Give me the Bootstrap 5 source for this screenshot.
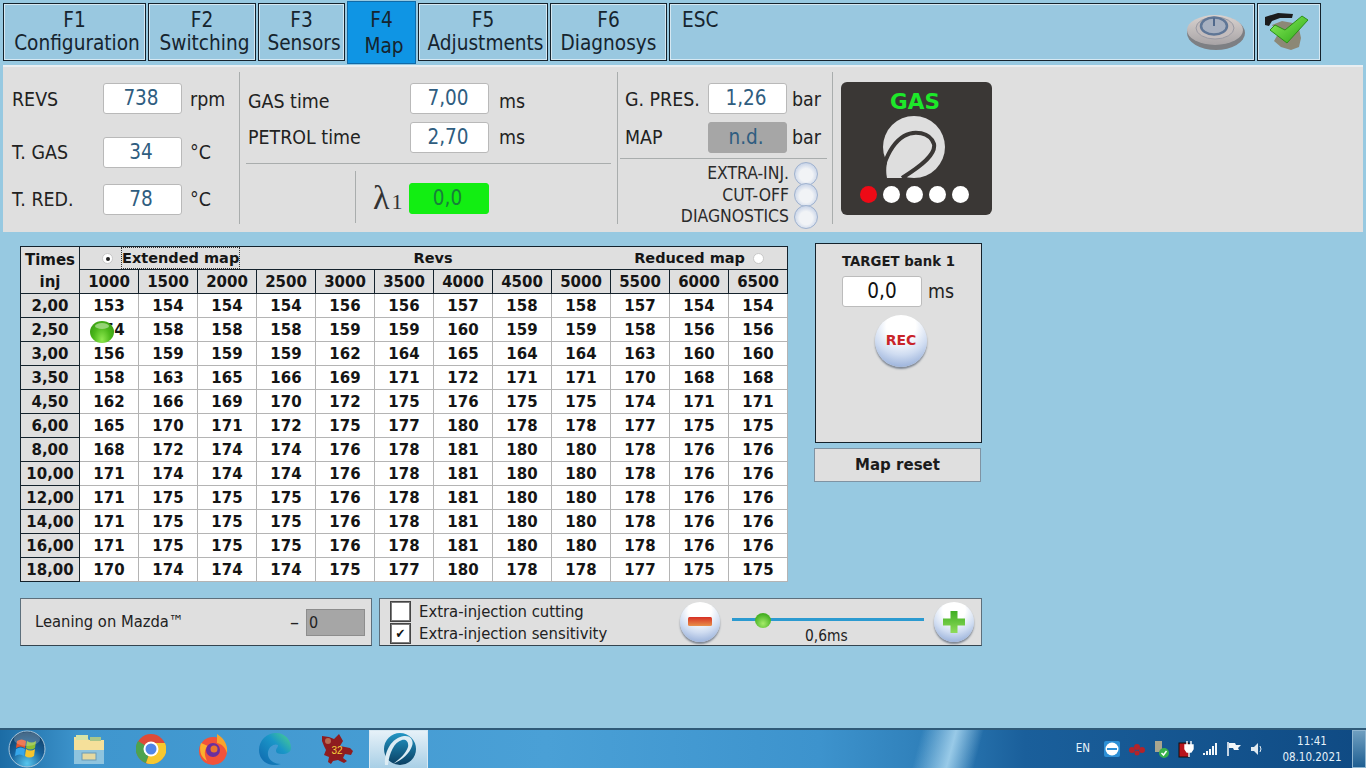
<!DOCTYPE html>
<html lang="en">
<head>
<meta charset="UTF-8" />
<title>Map</title>
<link href="https://cdn.jsdelivr.net/npm/bootstrap@5.3.3/dist/css/bootstrap.min.css" rel="stylesheet" />
<style>
  html, body { height: 768px; overflow: hidden; }
  body { background: #97c9e1; font-family: "DejaVu Sans Condensed", "Liberation Sans", sans-serif; color: #222; width: 1366px; }
  .app-shell { height: 768px; }

  /* function key tabs */
  .fkey-bar { height: 65px; padding: 3px 0 0 3px; gap: 2px; }
  .fkey { height: 58px; background: #99c8e0; border: 1px solid #14222c; box-shadow: 0 0 0 1px #d5e8f2 inset; color: #16242e; font-size: 20.6px; line-height: 22.5px; text-align: center; padding-top: 5px; }
  .fkey-sub { display: inline-block; margin-left: 5px; }
  .fkey-active { height: 63px; margin-top: -2px; background: #0f95e4; border-color: #0f6aa8; padding-top: 5px; line-height: 26px; box-shadow: none; }
  .fkey-esc { text-align: left; padding-left: 12px; }
  .w-f1 { width: 143px; } .w-f2 { width: 108px; } .w-f3 { width: 87px; } .w-f4 { width: 69px; }
  .w-f5 { width: 130px; } .w-f6 { width: 117px; } .w-esc { width: 586px; } .w-ok { width: 64px; padding: 0; }

  /* gauges */
  .gauge-panel { height: 167px; margin: 0 3px 0 3px; background: #dfdfdf; border-top: 2px solid #e9eef1; padding-top: 5px; font-size: 19.4px; color: #222; }
  .gauge-col { height: 152px; border-right: 1px solid #a9adad; }
  .col-a { width: 237px; padding: 11px 0 0 9px; }
  .col-b { width: 378px; padding-top: 11px; }
  .col-c { width: 215px; padding-top: 11px; }
  .read-row { height: 30px; }
  .read-label { line-height: 30px; }
  .drop-1 { padding-top: 1px; } .drop-2 { padding-top: 2px; } .drop-4 { padding-top: 4px; }
  .readout { width: 79px; height: 31px; background: #fff; border: 1px solid #b9b9b9; border-radius: 3px; color: #2f5d80; text-align: center; font-size: 20.5px; line-height: 29px; padding-right: 3px; }
  .readout-off { background: #a6a6a6; border-color: #a6a6a6; }
  .readout-on { background: #12ee12; border-color: #12ee12; color: #17803a; }
  .gap-a1 { margin-top: 24px; } .gap-a2 { margin-top: 17px; }
  .gap-b { margin-top: 9px; }
  .thin-rule { height: 1px; background: #a9adad; }
  .lambda-mark { font-family: "Liberation Serif", serif; font-size: 34px; line-height: 30px; color: #333; }
  .lambda-sub { font-family: "Liberation Serif", serif; font-size: 22px; margin-left: 2px; }
  .lamp-row { height: 21.5px; font-size: 17.4px; line-height: 21px; color: #2b2b2b; }
  .lamp { width: 24px; height: 24px; border-radius: 50%; background: radial-gradient(circle at 50% 55%, #f1f3f6 40%, #a8bbdc 100%); border: 1px solid #9fb2cf; margin-left: 5px; }
  .gas-box { width: 151px; height: 133px; margin: 10px 0 0 8px; background: #3a3735; border-radius: 6px; }
  .gas-word { color: #1de82a; font-weight: 700; font-size: 21.5px; line-height: 24px; padding: 8px 3px 0 0; font-family: "DejaVu Sans", sans-serif; }
  .led { width: 17px; height: 17px; border-radius: 50%; background: #fff; }
  .led-red { background: #ee0a16; }

  /* map table */
  .work-area { padding: 14px 0 0 20px; }
  .map-wrap { position: relative; width: 768px; }
  .inj-map { border-collapse: collapse; width: 768px; table-layout: fixed; font-family: "DejaVu Sans", sans-serif; font-weight: 700; background: #fff; color: #151515; font-size: 15px; border: 1px solid #14222c; }
  .inj-map td, .inj-map th { border: 1px solid #b4b4b4; height: 24px; padding: 0; text-align: center; line-height: 22px; }
  .inj-map thead th { background: #dfdfdf; border: 1px solid #14222c; }
  .inj-map th.row-head { background: #dfdfdf; border-right: 1px solid #14222c; border-left: 1px solid #14222c; border-bottom-color: #14222c; }
  .inj-map .top-head { height: 23px; }
  .inj-map .times-head { line-height: 22px; padding-top: 2px; }
  .head-inner { padding: 0 23px 0 22px; height: 22px; font-size: 14.5px; }
  .dotted-focus { border: 1px dotted #333; padding: 0; line-height: 20px; }
  .mini-radio { width: 11px; height: 11px; border-radius: 50%; background: #fff; border: 1px solid #c8c8c8; position: relative; }
  .mini-radio-on::after { content: ""; position: absolute; left: 3px; top: 3px; width: 4px; height: 4px; border-radius: 50%; background: #222; }
  .live-ball { position: absolute; left: 70px; top: 75px; width: 24px; height: 22px; border-radius: 50%; background: radial-gradient(ellipse at 50% 85%, #8fe84f 0%, #4bb81a 50%, #2f8f10 100%); }
  .live-ball::after { content: ""; position: absolute; left: 5px; top: 2px; width: 14px; height: 6px; border-radius: 50%; background: #a9dc8c; opacity: .8; }

  .target-side { width: 168px; margin-left: 27px; margin-top: -3px; }
  .target-card { width: 167px; height: 200px; background: #dfdfdf; border: 1px solid #14222c; text-align: center; padding-top: 8px; }
  .target-title { font-family: "DejaVu Sans", sans-serif; font-weight: 700; font-size: 13.3px; line-height: 20px; color: #1b1b1b; }
  .target-val { width: 80px; height: 31px; background: #fff; border: 1px solid #bcbcbc; border-radius: 3px; color: #111; font-size: 20.5px; line-height: 29px; }
  .target-unit { font-size: 19.4px; color: #222; margin-left: 6px; }
  .orb { border-radius: 50%; background: radial-gradient(circle at 50% 20%, #fff 30%, #cfdcf1 60%, #7f9ccf 100%); box-shadow: 0 2px 2px #7e8794; }
  .orb-rec { width: 52px; height: 52px; margin: 8px 0 0 59px; color: #c9242a; font-family: "DejaVu Sans", sans-serif; font-weight: 700; font-size: 14px; line-height: 50px; }
  .reset-bar { width: 167px; height: 34px; margin: 5px 0 0 -1px; background: #dfdfdf; border: 1px solid #7f93a3; font-family: "DejaVu Sans", sans-serif; font-weight: 700; font-size: 15px; line-height: 33px; text-align: center; color: #1b1b1b; }

  /* bottom strip */
  .strip { padding: 16px 0 0 20px; gap: 7px; }
  .strip-box { height: 48px; background: #dfdfdf; border: 1px solid #5d6f7c; border-bottom-color: #34444f; }
  .lean-box { width: 352px; padding: 0 6px 0 14px; font-size: 16.4px; }
  .lean-dash { font-size: 20px; margin-right: 1px; }
  .lean-val { width: 59px; height: 27px; background: #a6a6a6; border: 1px solid #8d8d8d; font-size: 16px; line-height: 25px; padding-left: 2px; margin-left: 6px; }
  .extra-box { width: 603px; font-size: 16.5px; padding-left: 10px; }
  .tick { width: 21px; height: 21px; background: #fff; border: 2px solid #7d7d7d; outline: 1px solid #444; outline-offset: -1px; font-size: 13px; line-height: 17px; text-align: center; color: #111; }
  .tick-gap { margin-top: 1px; }
  .tick-text { margin-left: 8px; line-height: 21px; }
  .orb-small { width: 40px; height: 40px; }
  .slide-area { width: 192px; margin: 0 10px 0 12px; position: relative; height: 46px; }
  .slide-track { position: absolute; left: 0; right: 0; top: 19px; height: 3px; background: #2b9ad0; }
  .slide-thumb { position: absolute; left: 23px; top: 14px; width: 16px; height: 15px; border-radius: 50%; background: radial-gradient(circle at 50% 70%, #a5ec6a, #46b023 70%); }
  .slide-label { position: absolute; left: 73px; top: 27px; font-size: 15.4px; line-height: 20px; }

  /* taskbar */
  .task-strip { height: 40px; margin-top: auto; background:
      linear-gradient(105deg, transparent 0 67%, rgba(190,230,250,.75) 69.500%, transparent 71.500%),
      linear-gradient(90deg, #1c6ca5 0%, #3f96ce 6%, #4aa0d6 40%, #3d93cd 60%, #2f7fb9 68%, #1a5f9b 75%, #0f4a83 100%);
      border-top: 2px solid #2f5a78; }
  .task-slot { width: 62px; height: 38px; }
  .task-slot-active { width: 59px; height: 39px; margin-left: 1px; background: linear-gradient(180deg, #e6f1f8, #a8cfe6); border: 1px solid #d7e8f2; }
  .start-slot { width: 58px; padding-right: 4px; }
  .tray { color: #e6f2fa; font-size: 11.5px; }
  .tray-lang { margin-right: 14px; }
  .tray-clock { width: 72px; text-align: center; line-height: 16px; font-size: 11.5px; margin-left: 12px; }
  .show-desk { width: 14px; height: 38px; margin-left: 4px; background: linear-gradient(180deg, #6f9fc0, #1f5f92); border: 1px solid #8fb6d1; }
</style>
</head>
<body>
<div class="app-shell d-flex flex-column">

  <div class="fkey-bar d-flex align-items-start">
    <div class="fkey w-f1">F1<br /><span class="fkey-sub">Configuration</span></div>
    <div class="fkey w-f2">F2<br /><span class="fkey-sub">Switching</span></div>
    <div class="fkey w-f3">F3<br /><span class="fkey-sub">Sensors</span></div>
    <div class="fkey w-f4 fkey-active">F4<br /><span class="fkey-sub">Map</span></div>
    <div class="fkey w-f5">F5<br /><span class="fkey-sub">Adjustments</span></div>
    <div class="fkey w-f6">F6<br />Diagnosys</div>
    <div class="fkey w-esc fkey-esc d-flex justify-content-between">
      <span>ESC</span>
      <svg class="me-2" style="margin-top:3px" width="60" height="40" viewBox="0 0 60 40">
        <defs><linearGradient id="capG" x1="0" y1="0" x2="0" y2="1"><stop offset="0" stop-color="#d9d2cf"/><stop offset="1" stop-color="#a8a4a6"/></linearGradient></defs>
        <ellipse cx="30" cy="21" rx="29" ry="17" fill="#7d7f83"/>
        <ellipse cx="29" cy="18" rx="28" ry="15" fill="url(#capG)"/>
        <ellipse cx="29" cy="16" rx="19" ry="11" fill="#c4bdbd" stroke="#9a9aa3"/>
        <ellipse cx="28" cy="14" rx="13" ry="8.500" fill="#a7b0c0" stroke="#5f7696" stroke-width="2.500"/>
        <path d="M28 6v8" stroke="#51698c" stroke-width="2"/>
      </svg>
    </div>
    <div class="fkey w-ok d-flex justify-content-center align-items-center">
      <svg width="50" height="46" viewBox="0 0 50 46">
        <defs><linearGradient id="tickG" x1="0" y1="0" x2="1" y2="1"><stop offset="0" stop-color="#8df05f"/><stop offset="1" stop-color="#2aa514"/></linearGradient></defs>
        <path d="M1 16V8L14 4l15 1-1 4-12 0-8 3-3 5z" fill="#1c1c1c"/>
        <path d="M8 16 18 12l16 3 3 14-2 9-8 3-10-3-7-6 4-7z" fill="#8c8876"/>
        <path d="M6 21l5-5 10 5L38 7l6 4-21 23z" fill="url(#tickG)" stroke="#2c8f18"/>
      </svg>
    </div>
  </div>

  <div class="gauge-panel d-flex">
    <div class="gauge-col col-a">
      <div class="read-row d-flex">
        <span class="read-label drop-2" style="width:91px">REVS</span><div class="readout">738</div><span class="read-label ms-2 drop-2">rpm</span>
      </div>
      <div class="read-row d-flex gap-a1">
        <span class="read-label drop-1" style="width:91px">T. GAS</span><div class="readout">34</div><span class="read-label ms-2 drop-1">°C</span>
      </div>
      <div class="read-row d-flex gap-a2">
        <span class="read-label drop-1" style="width:91px">T. RED.</span><div class="readout">78</div><span class="read-label ms-2 drop-1">°C</span>
      </div>
    </div>
    <div class="gauge-col col-b">
      <div class="read-row d-flex">
        <span class="read-label drop-4" style="width:162px;padding-left:8px;box-sizing:content-box">GAS time</span><div class="readout">7,00</div><span class="read-label drop-4" style="margin-left:10px">ms</span>
      </div>
      <div class="read-row d-flex gap-b">
        <span class="read-label drop-1" style="width:162px;padding-left:8px;box-sizing:content-box">PETROL time</span><div class="readout">2,70</div><span class="read-label drop-1" style="margin-left:10px">ms</span>
      </div>
      <div class="thin-rule" style="margin:11px 6px 0 6px"></div>
      <div class="d-flex" style="height:52px;margin-top:7px">
        <div style="width:116px;border-right:1px solid #a9adad"></div>
        <div class="d-flex" style="padding:12px 0 0 17px">
          <span class="lambda-mark" style="width:36px">λ<span class="lambda-sub">1</span></span>
          <div class="readout readout-on" style="margin-left:0;width:80px">0,0</div>
        </div>
      </div>
    </div>
    <div class="gauge-col col-c">
      <div class="read-row d-flex">
        <span class="read-label drop-2" style="width:83px;padding-left:7px;box-sizing:content-box">G. PRES.</span><div class="readout">1,26</div><span class="read-label drop-2" style="margin-left:5px">bar</span>
      </div>
      <div class="read-row d-flex gap-b">
        <span class="read-label drop-1" style="width:83px;padding-left:7px;box-sizing:content-box">MAP</span><div class="readout readout-off">n.d.</div><span class="read-label drop-1" style="margin-left:5px">bar</span>
      </div>
      <div class="thin-rule" style="margin:6px 5px 3px 2px"></div>
      <div class="lamp-row d-flex justify-content-end align-items-center" style="padding-right:14px;margin-top:4px"><span>EXTRA-INJ.</span><span class="lamp"></span></div>
      <div class="lamp-row d-flex justify-content-end align-items-center" style="padding-right:14px"><span>CUT-OFF</span><span class="lamp"></span></div>
      <div class="lamp-row d-flex justify-content-end align-items-center" style="padding-right:14px"><span>DIAGNOSTICS</span><span class="lamp"></span></div>
    </div>
    <div class="gas-box text-center">
      <div class="gas-word">GAS</div>
      <svg class="d-block" style="margin:1px 0 0 41px" width="66" height="64" viewBox="0 0 66 64">
        <circle cx="32" cy="32" r="31" fill="#dedede"/>
        <path d="M5 63C3 54 5 44 9 36l28 8-14 19z" fill="#dedede"/>
        <path d="M2 50C6 38 12 27 22 21 32 15 48 17 52 29 54 39 41 50 20 63" fill="none" stroke="#3a3735" stroke-width="4"/>
      </svg>
      <div class="d-flex" style="gap:6px;margin:7px 0 0 19px">
        <span class="led led-red"></span><span class="led"></span><span class="led"></span><span class="led"></span><span class="led"></span>
      </div>
    </div>
  </div>

  <div class="work-area d-flex">
    <div class="map-wrap">
      <table class="inj-map">
        <colgroup><col style="width:59px" /></colgroup>
        <thead>
          <tr class="top-head">
            <th rowspan="2" class="times-head">Times<br />inj</th>
            <th colspan="12" class="top-head">
              <div class="head-inner d-flex justify-content-between align-items-center">
                <span class="d-flex align-items-center" style="width:160px"><span class="mini-radio mini-radio-on me-2"></span><span class="dotted-focus">Extended map</span></span>
                <span style="margin-left:-30px">Revs</span>
                <span class="d-flex align-items-center">Reduced map<span class="mini-radio ms-2"></span></span>
              </div>
            </th>
          </tr>
          <tr>
            <th>1000</th><th>1500</th><th>2000</th><th>2500</th><th>3000</th><th>3500</th><th>4000</th><th>4500</th><th>5000</th><th>5500</th><th>6000</th><th>6500</th>
          </tr>
        </thead>
        <tbody>
          <tr><th class="row-head">2,00</th><td>153</td><td>154</td><td>154</td><td>154</td><td>156</td><td>156</td><td>157</td><td>158</td><td>158</td><td>157</td><td>154</td><td>154</td></tr>
          <tr><th class="row-head">2,50</th><td>154</td><td>158</td><td>158</td><td>158</td><td>159</td><td>159</td><td>160</td><td>159</td><td>159</td><td>158</td><td>156</td><td>156</td></tr>
          <tr><th class="row-head">3,00</th><td>156</td><td>159</td><td>159</td><td>159</td><td>162</td><td>164</td><td>165</td><td>164</td><td>164</td><td>163</td><td>160</td><td>160</td></tr>
          <tr><th class="row-head">3,50</th><td>158</td><td>163</td><td>165</td><td>166</td><td>169</td><td>171</td><td>172</td><td>171</td><td>171</td><td>170</td><td>168</td><td>168</td></tr>
          <tr><th class="row-head">4,50</th><td>162</td><td>166</td><td>169</td><td>170</td><td>172</td><td>175</td><td>176</td><td>175</td><td>175</td><td>174</td><td>171</td><td>171</td></tr>
          <tr><th class="row-head">6,00</th><td>165</td><td>170</td><td>171</td><td>172</td><td>175</td><td>177</td><td>180</td><td>178</td><td>178</td><td>177</td><td>175</td><td>175</td></tr>
          <tr><th class="row-head">8,00</th><td>168</td><td>172</td><td>174</td><td>174</td><td>176</td><td>178</td><td>181</td><td>180</td><td>180</td><td>178</td><td>176</td><td>176</td></tr>
          <tr><th class="row-head">10,00</th><td>171</td><td>174</td><td>174</td><td>174</td><td>176</td><td>178</td><td>181</td><td>180</td><td>180</td><td>178</td><td>176</td><td>176</td></tr>
          <tr><th class="row-head">12,00</th><td>171</td><td>175</td><td>175</td><td>175</td><td>176</td><td>178</td><td>181</td><td>180</td><td>180</td><td>178</td><td>176</td><td>176</td></tr>
          <tr><th class="row-head">14,00</th><td>171</td><td>175</td><td>175</td><td>175</td><td>176</td><td>178</td><td>181</td><td>180</td><td>180</td><td>178</td><td>176</td><td>176</td></tr>
          <tr><th class="row-head">16,00</th><td>171</td><td>175</td><td>175</td><td>175</td><td>176</td><td>178</td><td>181</td><td>180</td><td>180</td><td>178</td><td>176</td><td>176</td></tr>
          <tr><th class="row-head">18,00</th><td>170</td><td>174</td><td>174</td><td>174</td><td>175</td><td>177</td><td>180</td><td>178</td><td>178</td><td>177</td><td>175</td><td>175</td></tr>
        </tbody>
      </table>
      <div class="live-ball"></div>
    </div>

    <div class="target-side">
      <div class="target-card">
        <div class="target-title">TARGET bank 1</div>
        <div class="d-flex align-items-center" style="margin-top:4px;padding-left:26px">
          <div class="target-val">0,0</div><span class="target-unit">ms</span>
        </div>
        <div class="orb orb-rec">REC</div>
      </div>
      <div class="reset-bar">Map reset</div>
    </div>
  </div>

  <div class="strip d-flex">
    <div class="strip-box lean-box d-flex align-items-center">
      <span>Leaning on Mazda™</span>
      <span class="ms-auto lean-dash">–</span>
      <div class="lean-val">0</div>
    </div>
    <div class="strip-box extra-box d-flex align-items-center">
      <div>
        <div class="d-flex"><div class="tick"></div><span class="tick-text">Extra-injection cutting</span></div>
        <div class="d-flex tick-gap"><div class="tick">✔</div><span class="tick-text">Extra-injection sensitivity</span></div>
      </div>
      <div class="orb orb-small d-flex align-items-center justify-content-center ms-auto">
        <svg width="24" height="10" viewBox="0 0 24 10">
          <defs><linearGradient id="minusG" x1="0" y1="0" x2="0" y2="1"><stop offset="0" stop-color="#d62f24"/><stop offset="1" stop-color="#e8904a"/></linearGradient></defs>
          <rect width="24" height="9" rx="1.500" fill="url(#minusG)"/>
        </svg>
      </div>
      <div class="slide-area">
        <div class="slide-track"></div><div class="slide-thumb"></div><div class="slide-label">0,6ms</div>
      </div>
      <div class="orb orb-small d-flex align-items-center justify-content-center" style="margin-right:7px">
        <svg width="24" height="24" viewBox="0 0 24 24">
          <defs><linearGradient id="plusG" x1="0" y1="0" x2="0" y2="1"><stop offset="0" stop-color="#3fae22"/><stop offset="1" stop-color="#8fdc5a"/></linearGradient></defs>
          <path d="M8.500 1h7v7.500H23v7h-7.500V23h-7v-7.500H1v-7h7.500z" fill="url(#plusG)"/>
        </svg>
      </div>
    </div>
  </div>

  <div class="task-strip d-flex align-items-center">
    <div class="start-slot d-flex justify-content-center">
      <svg width="38" height="38" viewBox="0 0 38 38">
        <defs>
          <radialGradient id="orbG" cx=".5" cy=".9" r=".85"><stop offset="0" stop-color="#58c6ee"/><stop offset=".55" stop-color="#16609a"/><stop offset="1" stop-color="#123f66"/></radialGradient>
        </defs>
        <circle cx="19" cy="19" r="18" fill="url(#orbG)" stroke="#a9c6da"/>
        <path d="M9 11c3-2 6-2 9 0l-1 7c-3-2-6-2-9 0z" fill="#e8552a"/>
        <path d="M19 11c3 2 6 2 9 0l-1 7c-3 2-6 2-9 0z" fill="#8dbe33"/>
        <path d="M8 19c3-2 6-2 9 0l-1 7c-3-2-6-2-9 0z" fill="#37a6ea"/>
        <path d="M18 19c3 2 6 2 9 0l-1 7c-3 2-6 2-9 0z" fill="#f7c52d"/>
        <ellipse cx="19" cy="9" rx="13" ry="7" fill="#fff" opacity=".22"/>
      </svg>
    </div>
    <div class="task-slot d-flex justify-content-center align-items-center">
      <svg width="32" height="32" viewBox="0 0 32 32">
        <path d="M1 4h12l3 3h15v24H1z" fill="#f5e09a"/><rect x="3" y="2" width="12" height="5" fill="#d6e3a8"/><rect x="17" y="4" width="11" height="4" fill="#a9c68a"/>
        <rect x="1" y="17" width="30" height="14" fill="#8fc4de"/><rect x="9" y="20" width="14" height="7" fill="#e6d9a0" stroke="#6b9ab4"/>
      </svg>
    </div>
    <div class="task-slot d-flex justify-content-center align-items-center">
      <svg width="30" height="30" viewBox="0 0 30 30">
        <circle cx="15" cy="15" r="15" fill="#dd4b39"/>
        <path d="M15 15 2 7A15 15 0 0 0 10 29z" fill="#4ca34f"/>
        <path d="M15 15 10 29A15 15 0 0 0 29 9H15z" fill="#f6c830"/>
        <circle cx="15" cy="15" r="7.500" fill="#fff"/><circle cx="15" cy="15" r="5.500" fill="#4f86e8"/>
      </svg>
    </div>
    <div class="task-slot d-flex justify-content-center align-items-center">
      <svg width="32" height="32" viewBox="0 0 32 32">
        <circle cx="16" cy="18" r="14" fill="#f1533a"/>
        <path d="M20 1c8 5 11 12 10 19-2-6-5-9-10-10z" fill="#f9a32b"/>
        <path d="M4 10c-2 6-1 14 6 18-3-6-3-12 1-15z" fill="#fbb02d"/>
        <circle cx="16" cy="17" r="7" fill="#6a2f9e"/><circle cx="17" cy="16" r="3.500" fill="#e8762f"/>
      </svg>
    </div>
    <div class="task-slot d-flex justify-content-center align-items-center">
      <svg width="34" height="32" viewBox="0 0 34 32">
        <defs><linearGradient id="edgeG" x1="0" y1="1" x2="1" y2="0"><stop offset="0" stop-color="#0f66ad"/><stop offset=".6" stop-color="#1a96c8"/><stop offset="1" stop-color="#4fd38a"/></linearGradient></defs>
        <path d="M1 17C1 7 9 0 18 0c9 0 15 7 15 15 0 4-4 6-9 6-4 0-6-1-6-3 0-3 2-3 2-6-3-2-9 1-10 7-1 7 5 12 13 12-3 1-5 1-7 1C8 32 1 26 1 17z" fill="url(#edgeG)"/>
      </svg>
    </div>
    <div class="task-slot d-flex justify-content-center align-items-center">
      <svg width="36" height="32" viewBox="0 0 36 32">
        <path d="M3 3l7 1 5 2 5-5 4 7-3 5 10 2 3 3-2 4-6-1-2 4 4 3-3 2-6-3-5 1-2 3-3-2 1-5-5-2 2-5-2-4-2-5z" fill="#8f1c1f"/>
        <circle cx="9" cy="8" r="3" fill="#b86b52"/>
        <text x="18" y="21" text-anchor="middle" font-family="Liberation Sans, sans-serif" font-size="10" fill="#f5d33a">32</text>
      </svg>
    </div>
    <div class="task-slot task-slot-active d-flex justify-content-center align-items-center">
      <svg width="34" height="34" viewBox="0 0 34 34">
        <defs><linearGradient id="appG" x1="0" y1="0" x2="0" y2="1"><stop offset="0" stop-color="#2396c4"/><stop offset="1" stop-color="#0a3f62"/></linearGradient></defs>
        <circle cx="18" cy="17" r="16" fill="url(#appG)"/>
        <path d="M3 33C2 22 8 6 22 4c7-1 10 5 8 10-2 7-10 14-19 18 7-5 13-11 15-17 1-5-2-8-6-7C12 10 7 22 6 33z" fill="#dcecf4"/>
      </svg>
    </div>
    <div class="tray d-flex align-items-center ms-auto">
      <span class="tray-lang">EN</span>
      <svg class="me-2" width="16" height="16" viewBox="0 0 16 16"><rect width="16" height="16" rx="2" fill="#2d8fd5"/><circle cx="8" cy="8" r="6.500" fill="#fff"/><rect x="3" y="7" width="10" height="2" fill="#2d8fd5"/></svg>
      <svg class="me-2" width="18" height="14" viewBox="0 0 18 14"><g fill="#b3232a"><circle cx="4" cy="8" r="3"/><circle cx="9" cy="5" r="3"/><circle cx="14" cy="8" r="3"/><circle cx="9" cy="11" r="2.500"/></g></svg>
      <svg class="me-2" width="16" height="18" viewBox="0 0 16 18"><rect x="1" y="1" width="7" height="11" fill="#a9a68f"/><circle cx="10" cy="13" r="5" fill="#38b24a"/><path d="M7.500 13l2 2 3-4" stroke="#fff" fill="none" stroke-width="1.500"/></svg>
      <svg class="me-2" width="16" height="18" viewBox="0 0 16 18"><rect x="1" y="3" width="10" height="14" fill="#b8141c" stroke="#111"/><path d="M9 1v4M13 1v4M7 5h8v4l-2 3H9L7 9zM11 12v5" stroke="#fff" stroke-width="1.400" fill="#fff"/></svg>
      <svg class="me-2" width="16" height="14" viewBox="0 0 16 14"><g fill="#f2f6f9"><rect x="1" y="11" width="2" height="2"/><rect x="4" y="9" width="2" height="4"/><rect x="7" y="7" width="2" height="6"/><rect x="10" y="4" width="2" height="9"/><rect x="13" y="1" width="2" height="12"/></g></svg>
      <svg class="me-2" width="16" height="16" viewBox="0 0 16 16"><path d="M2 1v14" stroke="#fff" stroke-width="1.500"/><path d="M3 2h6l1 2h5l-3 3 1 2H8L7 7H3z" fill="#f2f6f9"/></svg>
      <svg width="14" height="14" viewBox="0 0 14 14"><path d="M1 5h3l4-4v12L4 9H1z" fill="#dfe9f0"/><path d="M10 4q2 3 0 6" stroke="#dfe9f0" fill="none"/></svg>
      <div class="tray-clock">11:41<br />08.10.2021</div>
      <div class="show-desk"></div>
    </div>
  </div>
</div>
<script src="https://cdn.jsdelivr.net/npm/bootstrap@5.3.3/dist/js/bootstrap.bundle.min.js"></script>
</body>
</html>
